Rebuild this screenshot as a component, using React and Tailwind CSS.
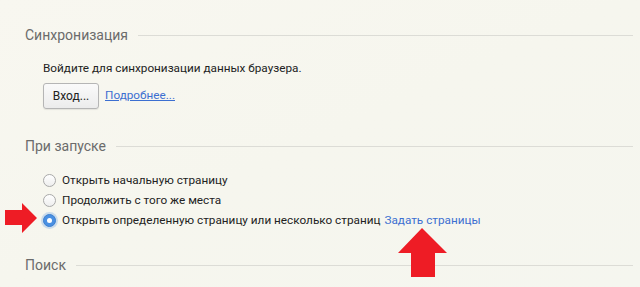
import React from 'react';

const font = { fontFamily: 'Roboto, "Noto Sans", sans-serif' };

const SectionTitle = ({ title }) => (
  <div className="flex items-center h-[20px]">
    <span className="text-[14px] text-[#6b6b6b] leading-none">{title}</span>
    <div className="flex-1 h-px bg-[#dcdcd6] ml-[10px]" />
  </div>
);

const Radio = ({ checked }) => (
  <span
    className={
      checked
        ? 'w-[13px] h-[13px] rounded-full bg-[#4a90e2] border border-[#3b7fd0] flex items-center justify-center shadow-[0_0_0_2px_rgba(120,170,230,0.35)] shrink-0'
        : 'w-[13px] h-[13px] rounded-full bg-gradient-to-b from-white to-[#eeeeee] border border-[#a9a9a9] shrink-0'
    }
  >
    {checked && <span className="w-[5px] h-[5px] rounded-full bg-white" />}
  </span>
);

const RadioRow = ({ label, checked, link }) => (
  <div className="flex items-center h-[20px] text-[11.75px] leading-[16px] text-[#222]">
    <Radio checked={checked} />
    <span className="ml-[6px]">{label}</span>
    {link && <span className="ml-[4px] text-[#3c6fd1]">{link}</span>}
  </div>
);

export default function App() {
  return (
    <div
      className="relative w-[640px] h-[287px] overflow-hidden bg-gradient-to-br from-[#f8f7f0] via-[#f6f6ee] to-[#f5f6ef]"
      style={font}
    >
      <div className="pl-[25px] pr-[7px] pt-[25px]">
        <SectionTitle title="Синхронизация" />

        <div className="pl-[18px] mt-[14px]">
          <div className="text-[11.75px] text-[#222] leading-[18px]">
            Войдите для синхронизации данных браузера.
          </div>
          <div className="flex items-center mt-[6px]">
            <button className="w-[56px] h-[26px] rounded-[3px] border border-[#b5b5b5] bg-gradient-to-b from-[#fafafa] to-[#ececec] text-[12px] text-[#222] shadow-[0_1px_1px_rgba(0,0,0,0.08)]">
              Вход...
            </button>
            <a className="ml-[6px] text-[11.75px] text-[#3c6fd1] underline">Подробнее...</a>
          </div>
        </div>

        <div className="mt-[27px]">
          <SectionTitle title="При запуске" />
        </div>

        <div className="pl-[18px] mt-[14px]">
          <RadioRow label="Открыть начальную страницу" />
          <RadioRow label="Продолжить с того же места" />
          <RadioRow
            label="Открыть определенную страницу или несколько страниц"
            checked
            link="Задать страницы"
          />
        </div>

        <div className="mt-[25px]">
          <SectionTitle title="Поиск" />
        </div>
      </div>

      {/* annotation arrows */}
      <svg className="absolute left-0 top-0" width="640" height="287">
        <polygon points="5,210 22,210 22,203 37,218 22,233 22,225 5,225" fill="#ee1c25" />
        <polygon points="422,228 447,253 435,253 435,277 411,277 411,253 398,253" fill="#ee1c25" />
      </svg>
    </div>
  );
}
